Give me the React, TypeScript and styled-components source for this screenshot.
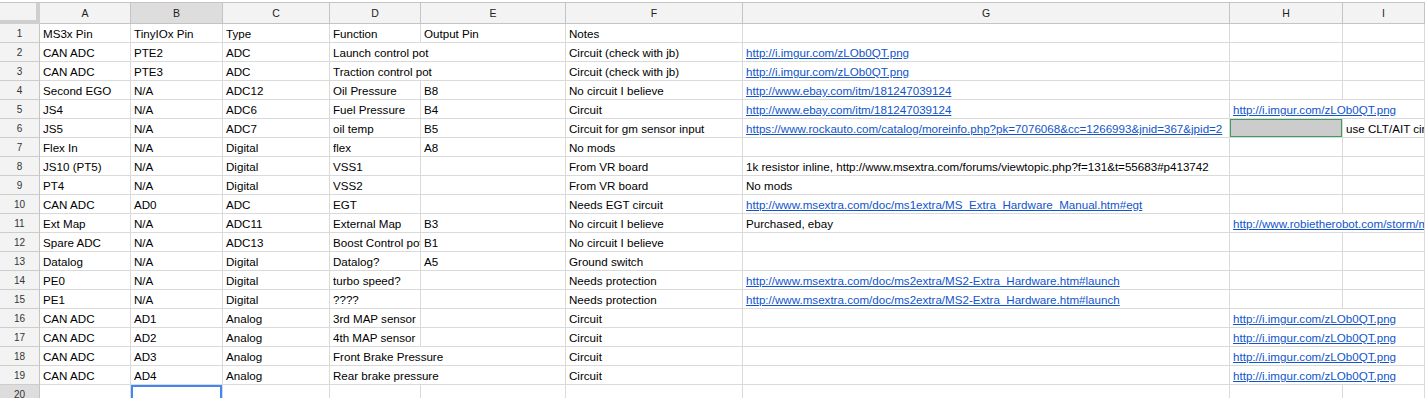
import React from "react";
import styled, { createGlobalStyle } from "styled-components";

const GlobalStyle = createGlobalStyle`
    body {
        margin: 0;
        background: #fff;
        overflow: hidden;
        font-family: "Liberation Sans", Arial, sans-serif;
    }
`;

const COLUMNS = "40px 91px 92px 107px 91px 145px 177px 487px 113px 1fr";
const LETTERS = ["A", "B", "C", "D", "E", "F", "G", "H", "I"];

const Sheet = styled.div`
    padding-top: 2px;
    width: 100%;
`;

const HeaderRow = styled.div`
    display: grid;
    grid-template-columns: ${COLUMNS};
    height: 22px;
    border-top: 1px solid #c4c4c4;
    box-sizing: border-box;
`;

const Corner = styled.div`
    background: #f3f3f3;
    border-right: 4px solid #cfcfcf;
    border-bottom: 4px solid #cfcfcf;
    box-sizing: border-box;
`;

const ColumnHeader = styled.div<{ $active?: boolean }>`
    display: flex;
    align-items: center;
    justify-content: center;
    background: ${(p) => (p.$active ? "#dddddd" : "#f3f3f3")};
    border-right: 1px solid #c4c4c4;
    border-bottom: 1px solid #c4c4c4;
    box-sizing: border-box;
    font-size: 10.5px;
    color: #222;
`;

const Row = styled.div`
    display: grid;
    grid-template-columns: ${COLUMNS};
    height: 19px;
`;

const RowHeader = styled.div<{ $active?: boolean }>`
    display: flex;
    align-items: center;
    justify-content: center;
    padding-top: 1px;
    background: ${(p) => (p.$active ? "#dddddd" : "#f3f3f3")};
    border-right: 1px solid #c4c4c4;
    border-bottom: 1px solid #cdcdcd;
    box-sizing: border-box;
    font-size: 10px;
    color: #333;
`;

const Cell = styled.div<{ $span?: number; $fill?: string; $ring?: string; $ringWidth?: number }>`
    grid-column: span ${(p) => p.$span || 1};
    background: ${(p) => p.$fill || "#fff"};
    border-right: 1px solid #dadada;
    border-bottom: 1px solid #dadada;
    box-sizing: border-box;
    padding: 0 3px;
    font-size: 11.6px;
    line-height: 20px;
    color: #000;
    white-space: nowrap;
    overflow: hidden;
    box-shadow: ${(p) => (p.$ring ? `inset 0 0 0 ${p.$ringWidth || 1}px ${p.$ring}` : "none")};
`;

const Link = styled.a`
    color: #1155cc;
    text-decoration: underline;
`;

type CellData = { t?: string; link?: boolean; span?: number; fill?: string; ring?: string; ringWidth?: number };

const IMGUR = "http://i.imgur.com/zLOb0QT.png";
const EBAY = "http://www.ebay.com/itm/181247039124";
const MS2 = "http://www.msextra.com/doc/ms2extra/MS2-Extra_Hardware.htm#launch";

const c = (t: string, span?: number): CellData => ({ t, span });
const l = (t: string, span?: number): CellData => ({ t, link: true, span });
const e: CellData = {};

const rows: CellData[][] = [
    [c("MS3x Pin"), c("TinyIOx Pin"), c("Type"), c("Function"), c("Output Pin"), c("Notes"), e, e, e],
    [c("CAN ADC"), c("PTE2"), c("ADC"), c("Launch control pot", 2), c("Circuit (check with jb)"), l(IMGUR), e, e],
    [c("CAN ADC"), c("PTE3"), c("ADC"), c("Traction control pot", 2), c("Circuit (check with jb)"), l(IMGUR), e, e],
    [c("Second EGO"), c("N/A"), c("ADC12"), c("Oil Pressure"), c("B8"), c("No circuit I believe"), l(EBAY), e, e],
    [c("JS4"), c("N/A"), c("ADC6"), c("Fuel Pressure"), c("B4"), c("Circuit"), l(EBAY), l(IMGUR, 2)],
    [
        c("JS5"), c("N/A"), c("ADC7"), c("oil temp"), c("B5"), c("Circuit for gm sensor input"),
        l("https://www.rockauto.com/catalog/moreinfo.php?pk=7076068&cc=1266993&jnid=367&jpid=2"),
        { fill: "#cccccc", ring: "#3d9d5f" },
        c("use CLT/AIT circuit"),
    ],
    [c("Flex In"), c("N/A"), c("Digital"), c("flex"), c("A8"), c("No mods"), e, e, e],
    [c("JS10 (PT5)"), c("N/A"), c("Digital"), c("VSS1"), e, c("From VR board"), c("1k resistor inline, http://www.msextra.com/forums/viewtopic.php?f=131&t=55683#p413742"), e, e],
    [c("PT4"), c("N/A"), c("Digital"), c("VSS2"), e, c("From VR board"), c("No mods"), e, e],
    [c("CAN ADC"), c("AD0"), c("ADC"), c("EGT"), e, c("Needs EGT circuit"), l("http://www.msextra.com/doc/ms1extra/MS_Extra_Hardware_Manual.htm#egt"), e, e],
    [c("Ext Map"), c("N/A"), c("ADC11"), c("External Map"), c("B3"), c("No circuit I believe"), c("Purchased, ebay"), l("http://www.robietherobot.com/storm/mapsensor.htm", 2)],
    [c("Spare ADC"), c("N/A"), c("ADC13"), c("Boost Control pot"), c("B1"), c("No circuit I believe"), e, e, e],
    [c("Datalog"), c("N/A"), c("Digital"), c("Datalog?"), c("A5"), c("Ground switch"), e, e, e],
    [c("PE0"), c("N/A"), c("Digital"), c("turbo speed?"), e, c("Needs protection"), l(MS2), e, e],
    [c("PE1"), c("N/A"), c("Digital"), c("????"), e, c("Needs protection"), l(MS2), e, e],
    [c("CAN ADC"), c("AD1"), c("Analog"), c("3rd MAP sensor"), e, c("Circuit"), e, l(IMGUR, 2)],
    [c("CAN ADC"), c("AD2"), c("Analog"), c("4th MAP sensor"), e, c("Circuit"), e, l(IMGUR, 2)],
    [c("CAN ADC"), c("AD3"), c("Analog"), c("Front Brake Pressure", 2), c("Circuit"), e, l(IMGUR, 2)],
    [c("CAN ADC"), c("AD4"), c("Analog"), c("Rear brake pressure", 2), c("Circuit"), e, l(IMGUR, 2)],
    [e, { ring: "#4285f4", ringWidth: 2 }, e, e, e, e, e, e, e],
];

export default function App() {
    return (
        <>
            <GlobalStyle />
            <Sheet>
                <HeaderRow>
                    <Corner />
                    {LETTERS.map((letter) => (
                        <ColumnHeader key={letter} $active={letter === "B"}>
                            {letter}
                        </ColumnHeader>
                    ))}
                </HeaderRow>
                {rows.map((cells, i) => (
                    <Row key={"row" + i}>
                        <RowHeader $active={i === 19}>{i + 1}</RowHeader>
                        {cells.map((cell, j) => (
                            <Cell
                                key={"cell" + i + "-" + j}
                                $span={cell.span}
                                $fill={cell.fill}
                                $ring={cell.ring}
                                $ringWidth={cell.ringWidth}
                            >
                                {cell.link ? <Link href="#">{cell.t}</Link> : cell.t}
                            </Cell>
                        ))}
                    </Row>
                ))}
            </Sheet>
        </>
    );
}
